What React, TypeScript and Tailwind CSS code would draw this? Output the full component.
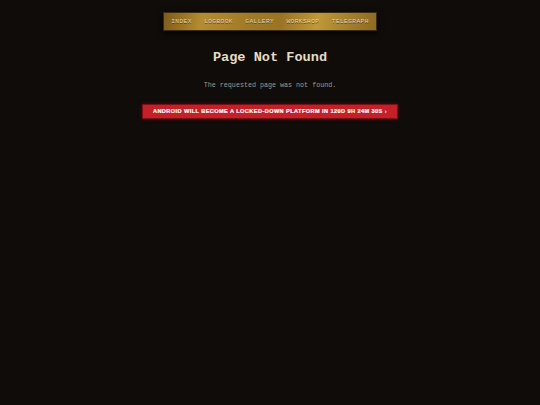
const navItems = ['INDEX', 'LOGBOOK', 'GALLERY', 'WORKSHOP', 'TELEGRAPH'];

const App = () => {
    return (
        <div className="min-h-screen w-full bg-[#0f0c0a] flex flex-col items-center pt-[12px]">
            {/* barra de navegacion dorada */}
            <nav className="flex items-center h-[19px] px-[1px] border border-[#3a2a10] bg-[linear-gradient(100deg,#7d5b1c_0%,#b48c30_18%,#a07a28_40%,#9a7424_55%,#bf9838_72%,#8c6a22_100%)] shadow-[0_2px_6px_rgba(0,0,0,0.8)]">
                {navItems.map((item) => (
                    <a
                        key={item}
                        className="px-[6.2px] text-[6.2px] tracking-[0.4px] text-[#e6d8b0] [text-shadow:0_0.5px_0.5px_rgba(50,32,8,0.7)]"
                        style={{ fontFamily: '"Liberation Mono", monospace' }}
                    >
                        {item}
                    </a>
                ))}
            </nav>

            <h1
                className="mt-[18px] text-[13.6px] leading-[18px] font-bold text-[#e6dcc4]"
                style={{ fontFamily: '"Liberation Mono", monospace' }}
            >
                Page Not Found
            </h1>

            <p
                className="mt-[14px] text-[6.7px] leading-[9px] text-[#a39a88]"
                style={{ fontFamily: '"Liberation Mono", monospace' }}
            >
                The requested page was not found.
            </p>

            {/* banner rojo */}
            <div className="mt-[14px] w-[256px] h-[15px] flex items-center justify-center bg-[#c51f28] border border-[#7a1016] shadow-[0_0_4px_rgba(180,20,30,0.35)]">
                <span
                    className="text-[5.6px] font-black tracking-[0.42px] text-white whitespace-nowrap [-webkit-text-stroke:0.2px_white]"
                    style={{ fontFamily: '"Liberation Sans", Arial, sans-serif' }}
                >
                    ANDROID WILL BECOME A LOCKED-DOWN PLATFORM IN 120D 9H 24M 30S
                    <span className="text-[#f0b0b0]"> ›</span>
                </span>
            </div>
        </div>
    );
};

export default App;
